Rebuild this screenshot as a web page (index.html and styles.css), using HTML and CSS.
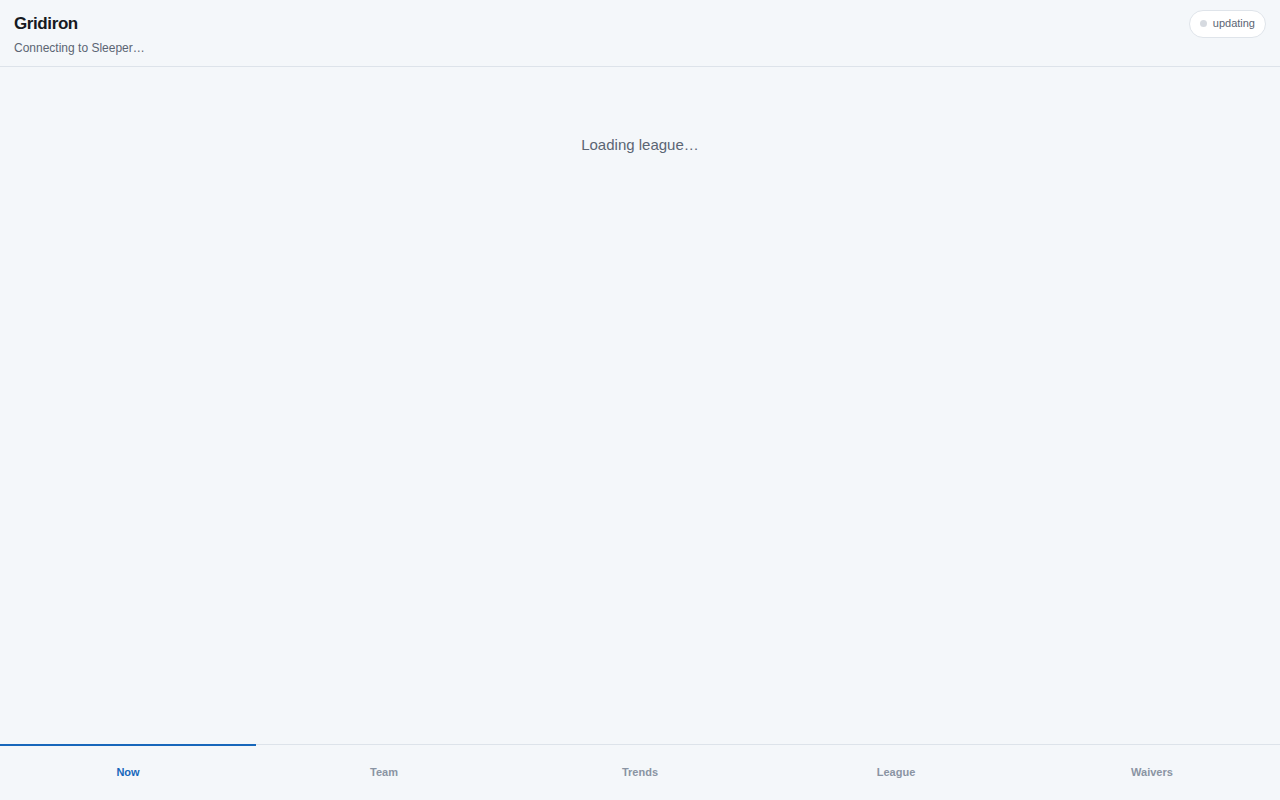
FILE: index.html
```html
<!DOCTYPE html>
<html lang="en">
<head>
<meta charset="utf-8">
<title>Gridiron</title>
<link rel="stylesheet" href="styles.css">
</head>
<body>
<div class="app">
  <header class="topbar">
    <div class="brand">
      <h1 class="title">Gridiron</h1>
      <p class="subtitle">Connecting to Sleeper…</p>
    </div>
    <div class="status-pill"><span class="dot"></span><span class="status-text">updating</span></div>
  </header>
  <main class="content">
    <p class="loading">Loading league…</p>
  </main>
  <nav class="tabbar">
    <a class="tab active">Now</a>
    <a class="tab">Team</a>
    <a class="tab">Trends</a>
    <a class="tab">League</a>
    <a class="tab">Waivers</a>
  </nav>
</div>
</body>
</html>
```

FILE: styles.css
```css
* { box-sizing: border-box; }
html, body { margin: 0; padding: 0; height: 100%; }
body {
  background: #f4f7fa;
  font-family: "Liberation Sans", Arial, sans-serif;
  color: #14181f;
}
.app {
  display: flex;
  flex-direction: column;
  height: 100vh;
}
.topbar {
  display: flex;
  justify-content: space-between;
  align-items: flex-start;
  padding: 10px 14px 10px 14px;
  border-bottom: 1px solid #dde3ea;
}
.brand { padding-top: 3px; }
.title {
  margin: 0;
  font-size: 17px;
  line-height: 22px;
  font-weight: 700;
  letter-spacing: -0.4px;
  color: #161a21;
}
.subtitle {
  margin: 5px 0 0 0;
  font-size: 12px;
  line-height: 16px;
  color: #5b6573;
}
.status-pill {
  display: flex;
  align-items: center;
  gap: 6px;
  height: 28px;
  padding: 0 10px 2px 10px;
  background: #ffffff;
  border: 1px solid #dfe4ea;
  border-radius: 14px;
}
.dot {
  width: 7px;
  height: 7px;
  border-radius: 50%;
  background: #d6dae0;
}
.status-text {
  font-size: 11px;
  color: #5b6573;
}
.content {
  flex: 1;
  padding-top: 68px;
  text-align: center;
}
.loading {
  margin: 0;
  font-size: 15px;
  line-height: 20px;
  color: #5b6573;
}
.tabbar {
  display: flex;
  height: 56px;
  border-top: 1px solid #dde3ea;
}
.tab {
  flex: 1;
  display: flex;
  align-items: center;
  justify-content: center;
  font-size: 11px;
  font-weight: 700;
  color: #8a94a3;
  margin-top: -1px;
  border-top: 2px solid transparent;
  padding-bottom: 3px;
}
.tab.active {
  color: #1767bb;
  border-top-color: #1767bb;
}
```
